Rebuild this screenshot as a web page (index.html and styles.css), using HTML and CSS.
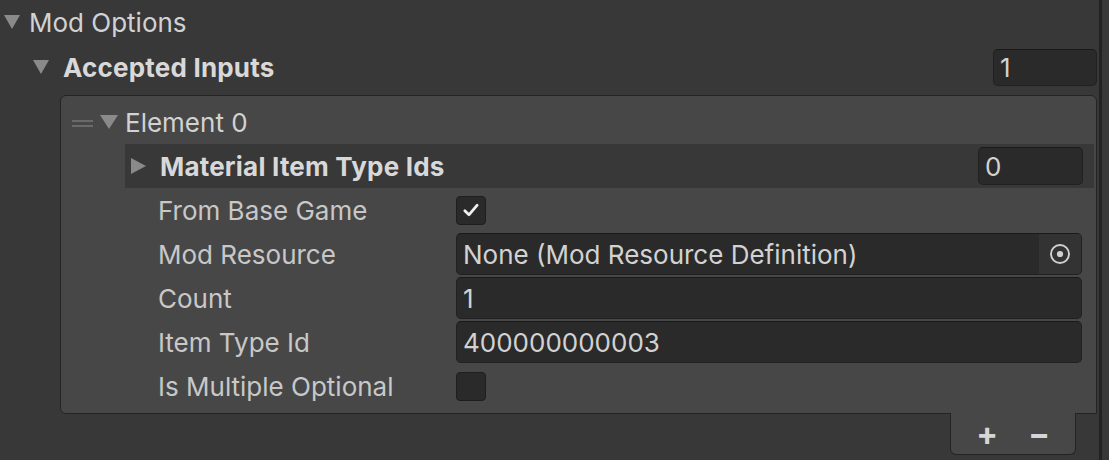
FILE: index.html
```html
<!DOCTYPE html>
<html lang="en">
<head>
    <meta charset="UTF-8">
    <meta name="viewport" content="width=device-width, initial-scale=1.0">
    <title>Mod Options</title>
    <link rel="stylesheet" href="styles.css">
</head>
<body>
    <div class="inspector">
        <div class="row foldout">
            <span class="arrow down"></span>
            <span class="label">Mod Options</span>
        </div>

        <div class="row list-head">
            <span class="arrow down"></span>
            <span class="label bold">Accepted Inputs</span>
            <span class="field size-field">1</span>
        </div>

        <div class="list">
            <div class="row element-head">
                <span class="handle"></span>
                <span class="arrow down"></span>
                <span class="label">Element 0</span>
            </div>

            <div class="row sub-head">
                <span class="arrow right"></span>
                <span class="label bold">Material Item Type Ids</span>
                <span class="field size-field">0</span>
            </div>

            <div class="row prop">
                <span class="prop-label">From Base Game</span>
                <span class="checkbox checked">
                    <svg viewBox="0 0 16 16" width="22" height="22"><path d="M3.5 8.5 L6.5 11.5 L12.5 4.5" fill="none" stroke="#f0f0f0" stroke-width="2" stroke-linecap="round" stroke-linejoin="round"/></svg>
                </span>
            </div>

            <div class="row prop">
                <span class="prop-label">Mod Resource</span>
                <span class="field object-field">
                    <span class="object-text">None (Mod Resource Definition)</span>
                    <span class="picker">
                        <svg viewBox="0 0 20 20" width="24" height="24"><circle cx="10" cy="10" r="7.5" fill="none" stroke="#d0d0d0" stroke-width="1.6"/><circle cx="10" cy="10" r="2.6" fill="#d0d0d0"/></svg>
                    </span>
                </span>
            </div>

            <div class="row prop">
                <span class="prop-label">Count</span>
                <span class="field wide">1</span>
            </div>

            <div class="row prop">
                <span class="prop-label">Item Type Id</span>
                <span class="field wide">400000000003</span>
            </div>

            <div class="row prop">
                <span class="prop-label">Is Multiple Optional</span>
                <span class="checkbox"></span>
            </div>
        </div>

        <div class="list-footer">
            <div class="footer-tab">
                <span class="footer-btn">+</span>
                <span class="footer-btn">&minus;</span>
            </div>
        </div>
    </div>
</body>
</html>
```

FILE: styles.css
```css
* {
    margin: 0;
    padding: 0;
    box-sizing: border-box;
}

body {
    font-family: Inter, "Noto Sans", "Liberation Sans", sans-serif;
    font-size: 26px;
    background-color: #383838;
    color: #d2d2d2;
    width: 1109px;
    height: 460px;
    overflow: hidden;
}

.inspector {
    width: 1102px;
    height: 460px;
    border-right: 3px solid #232323;
}

.row {
    display: flex;
    align-items: center;
    height: 44px;
}

.label {
    white-space: nowrap;
}

.bold {
    font-weight: 700;
    letter-spacing: 0.2px;
    color: #d8d8d8;
}

.arrow {
    display: inline-block;
    width: 0;
    height: 0;
    flex-shrink: 0;
}

.arrow.down {
    border-left: 8px solid transparent;
    border-right: 8px solid transparent;
    border-top: 14px solid #8a8a8a;
}

.arrow.right {
    border-top: 8px solid transparent;
    border-bottom: 8px solid transparent;
    border-left: 15px solid #8a8a8a;
}

/* top level foldout */
.foldout {
    padding-left: 4px;
}

.foldout .arrow {
    margin-right: 9px;
}

/* list header */
.list-head {
    padding-left: 33px;
    height: 46px;
}

.list-head .arrow {
    margin-right: 14px;
}

.list-head .size-field {
    margin-left: auto;
    width: 104px;
    height: 37px;
    margin-right: 2px;
}

.field {
    display: flex;
    align-items: center;
    background-color: #2a2a2a;
    border: 1px solid #212121;
    border-top-color: #1a1a1a;
    border-radius: 5px;
    padding-left: 6px;
    color: #d2d2d2;
    white-space: nowrap;
}

/* reorderable list box */
.list {
    margin-left: 60px;
    margin-top: 5px;
    width: 1037px;
    height: 319px;
    background-color: #474747;
    border: 1px solid #242424;
    border-radius: 6px 6px 0 6px;
    padding-top: 4px;
}

.element-head {
    padding-left: 11px;
}

.handle {
    width: 21px;
    height: 7px;
    border-top: 2px solid #6a6a6a;
    border-bottom: 2px solid #6a6a6a;
    margin-right: 7px;
    margin-top: 2px;
}

.element-head .arrow {
    border-left-width: 9px;
    border-right-width: 9px;
    margin-right: 7px;
}

.sub-head {
    margin-left: 64px;
    margin-right: 2px;
    background-color: #383838;
    padding-left: 6px;
    padding-right: 11px;
}

.sub-head .arrow {
    margin-right: 14px;
}

.sub-head .size-field {
    margin-left: auto;
    width: 105px;
    height: 38px;
}

.prop {
    padding-left: 97px;
}

.prop-label {
    width: 298px;
    flex-shrink: 0;
    color: #c8c8c8;
}

.wide,
.object-field {
    width: 626px;
    height: 42px;
}

.object-field {
    padding-right: 0;
    overflow: hidden;
}

.object-text {
    flex: 1;
}

.picker {
    display: flex;
    align-items: center;
    justify-content: center;
    width: 42px;
    height: 100%;
    background-color: #333333;
}

.checkbox {
    display: flex;
    align-items: center;
    justify-content: center;
    width: 30px;
    height: 29px;
    background-color: #2a2a2a;
    border: 1px solid #1e1e1e;
    border-radius: 4px;
}

/* footer with add/remove */
.list-footer {
    display: flex;
    justify-content: flex-end;
    width: 1076px;
    margin-top: -1px;
}

.footer-tab {
    display: flex;
    align-items: center;
    justify-content: space-around;
    width: 126px;
    height: 42px;
    background-color: #474747;
    border: 1px solid #242424;
    border-top: none;
    border-radius: 0 0 6px 6px;
    padding: 0 10px;
}

.footer-btn {
    font-size: 32px;
    font-weight: 700;
    color: #d6d6d6;
    line-height: 1;
}
```
